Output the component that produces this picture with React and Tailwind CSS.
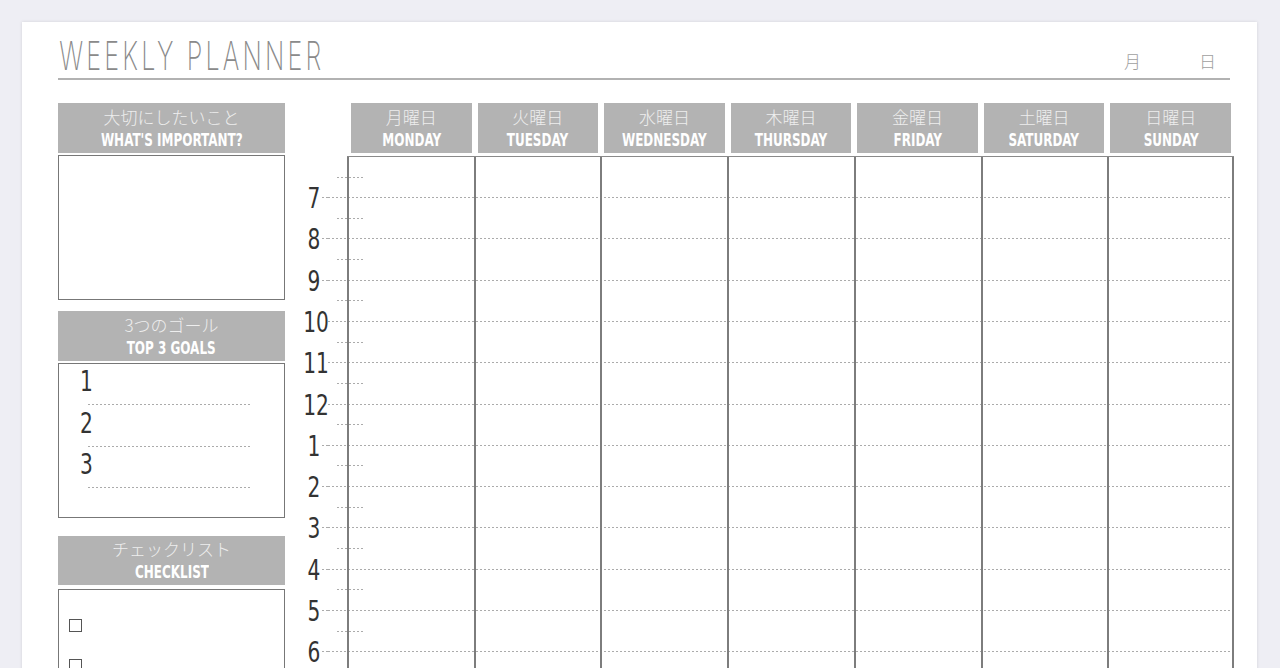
const DAYS = [
  ['月曜日', 'MONDAY'],
  ['火曜日', 'TUESDAY'],
  ['水曜日', 'WEDNESDAY'],
  ['木曜日', 'THURSDAY'],
  ['金曜日', 'FRIDAY'],
  ['土曜日', 'SATURDAY'],
  ['日曜日', 'SUNDAY'],
];

const HOURS = [7, 8, 9, 10, 11, 12, 1, 2, 3, 4, 5, 6];

const cond = 'font-["DejaVu_Sans_Condensed","DejaVu_Sans",sans-serif] font-stretch-condensed';
const jp = 'font-["Noto_Sans_CJK_JP",sans-serif]';
const dots = 'h-px bg-[repeating-linear-gradient(90deg,#ababab_0_2px,transparent_2px_4px)]';

function Label({ jpText, enText, className = 'h-[50px]' }) {
  return (
    <div className={`${className} bg-[#b3b3b3] flex flex-col items-center justify-center`}>
      <span className={`${jp} font-light text-[17px] leading-[20px] text-[#eeeeee]`}>{jpText}</span>
      <span className={`${cond} inline-block scale-x-[0.74] mt-[3px] font-semibold text-[18px] leading-[20px] text-white whitespace-nowrap`}>
        {enText}
      </span>
    </div>
  );
}

function App() {
  return (
    <div className="h-[668px] overflow-hidden bg-[#eeeef4] pt-[22px] pl-[22px] pr-[23px]">
      <div className="h-[700px] bg-white shadow-[0_0_3px_rgba(0,0,0,0.12)] pl-[36px] pr-[23px] pt-[14px]">
        <div className="mr-[4px] flex items-end justify-between border-b-2 border-[#b2b2b2] pb-[2px]">
          <h1 className="font-['Inter',sans-serif] font-extralight text-[40px] leading-none tracking-[5px] text-[#8a8a8a] origin-left scale-x-[0.63] pl-[2px] whitespace-nowrap">
            WEEKLY PLANNER
          </h1>
          <div className={`${jp} font-light text-[17px] text-[#a0a0a0] flex mr-[14px] mb-[3px]`}>
            <span>月</span>
            <span className="ml-[58px]">日</span>
          </div>
        </div>

        <div className="mt-[23px] flex">
          {/* left column */}
          <div className="w-[227px] shrink-0">
            <Label jpText="大切にしたいこと" enText="WHAT'S IMPORTANT?" />
            <div className="mt-[2px] h-[145px] border border-[#777]" />

            <Label jpText="3つのゴール" enText="TOP 3 GOALS" className="mt-[11px] h-[50px]" />
            <div className="mt-[2px] h-[155px] border border-[#777]">
              {[1, 2, 3].map((n) => (
                <div key={n} className="h-[41.3px] flex flex-col justify-end items-start">
                  <span className={`${cond} inline-block origin-left scale-x-[0.8] ml-[21px] mb-[8px] text-[28px] leading-none text-[#333]`}>
                    {n}
                  </span>
                  <div className={`${dots} ml-[29px] w-[163px]`} />
                </div>
              ))}
            </div>

            <Label jpText="チェックリスト" enText="CHECKLIST" className="mt-[18px] h-[49px]" />
            <div className="mt-[4px] h-[200px] border border-[#777] pt-[29px] pl-[10px]">
              <div className="w-[13px] h-[13px] border-[1.5px] border-[#555]" />
              <div className="mt-[27px] w-[13px] h-[13px] border-[1.5px] border-[#555]" />
            </div>
          </div>

          {/* week grid */}
          <div className="ml-[15px] flex-1">
            <div className="ml-[48px] grid grid-cols-7 h-[50px]">
              {DAYS.map(([j, e]) => (
                <div key={e} className="px-[3px]">
                  <Label jpText={j} enText={e} />
                </div>
              ))}
            </div>

            <div className="relative mt-[3px]">
              <div className="h-[20.6px]" />
              {HOURS.map((h) => (
                <div key={h} className="h-[41.27px] flex flex-col">
                  <div className={`${dots} ml-[37px] w-[28px]`} />
                  <div className="flex-1 flex items-center">
                    <div className="w-[28px] flex items-center">
                      <div className="flex-1" />
                      <span className={`${cond} inline-block scale-x-[0.8] mt-[3px] text-[28px] leading-none text-[#333]`}>{h}</span>
                      <div className={`${dots} flex-1`} />
                    </div>
                    <div className={`${dots} flex-1`} />
                  </div>
                </div>
              ))}
              <div className="absolute top-0 bottom-0 left-[47px] right-0 grid grid-cols-7 border-t border-[#8a8a8a]">
                {DAYS.map(([, e], i) => (
                  <div
                    key={e}
                    className={`border-l-2 border-[#7d7d7d] ${i === 6 ? 'border-r-2' : ''}`}
                  />
                ))}
              </div>
            </div>
          </div>
        </div>
      </div>
    </div>
  );
}

export default App;
